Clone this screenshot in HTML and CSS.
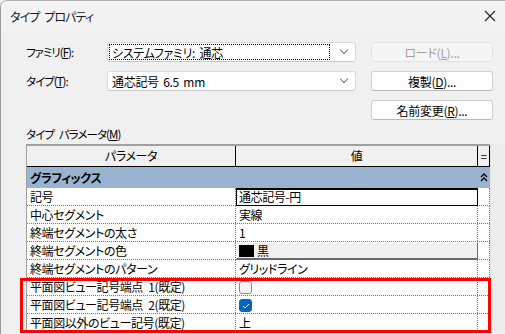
FILE: index.html
```html
<!DOCTYPE html>
<html lang="ja">
<head>
    <meta charset="UTF-8">
    <title>タイプ プロパティ</title>
    <link rel="stylesheet" href="styles.css">
</head>
<body>
    <div class="window">
        <div class="titlebar">
            <span class="title">タイプ プロパティ</span>
            <span class="close">
                <svg width="12" height="12" viewBox="0 0 12 12"><path d="M1 1L11 11M11 1L1 11" stroke="#222" stroke-width="1.1" fill="none"/></svg>
            </span>
        </div>

        <div class="content">
            <!-- family / type selection -->
            <div class="top-grid">
                <label class="lbl">ファミリ(<u>F</u>):</label>
                <div class="combo">
                    <span class="combo-text focused">システムファミリ: 通芯</span>
                    <span class="chev"></span>
                </div>
                <button class="btn disabled">ロード(<u>L</u>)...</button>

                <label class="lbl">タイプ(<u>T</u>):</label>
                <div class="combo">
                    <span class="combo-text">通芯記号 6.5 mm</span>
                    <span class="chev"></span>
                </div>
                <button class="btn">複製(<u>D</u>)...</button>

                <span></span>
                <span></span>
                <button class="btn">名前変更(<u>R</u>)...</button>
            </div>

            <div class="section-label">タイプ パラメータ(<u>M</u>)</div>

            <!-- parameter grid -->
            <div class="grid-wrap">
                <div class="pgrid">
                    <div class="row head">
                        <div class="cell">パラメータ</div>
                        <div class="cell">値</div>
                        <div class="cell eq">=</div>
                    </div>
                    <div class="row group">
                        <div class="cell">グラフィックス</div>
                        <div class="cell"></div>
                        <div class="cell chevs">
                            <svg width="8" height="9" viewBox="0 0 8 9"><path d="M1 4L4 1L7 4M1 8L4 5L7 8" stroke="#000" stroke-width="1.3" fill="none"/></svg>
                        </div>
                    </div>
                    <div class="row">
                        <div class="cell">記号</div>
                        <div class="cell"><span class="editbox">通芯記号-円</span></div>
                        <div class="cell"></div>
                    </div>
                    <div class="row">
                        <div class="cell">中心セグメント</div>
                        <div class="cell">実線</div>
                        <div class="cell"></div>
                    </div>
                    <div class="row">
                        <div class="cell">終端セグメントの太さ</div>
                        <div class="cell">1</div>
                        <div class="cell"></div>
                    </div>
                    <div class="row">
                        <div class="cell">終端セグメントの色</div>
                        <div class="cell"><span class="colorbtn"><span class="swatch"></span>黒</span></div>
                        <div class="cell"></div>
                    </div>
                    <div class="row">
                        <div class="cell">終端セグメントのパターン</div>
                        <div class="cell">グリッドライン</div>
                        <div class="cell"></div>
                    </div>
                    <div class="row">
                        <div class="cell">平面図ビュー記号端点 1(既定)</div>
                        <div class="cell"><span class="check"></span></div>
                        <div class="cell"></div>
                    </div>
                    <div class="row">
                        <div class="cell">平面図ビュー記号端点 2(既定)</div>
                        <div class="cell"><span class="check on">
                            <svg width="8" height="6" viewBox="0 0 8 6"><path d="M1 3L3 5L7 1" stroke="#fff" stroke-width="1" fill="none"/></svg>
                        </span></div>
                        <div class="cell"></div>
                    </div>
                    <div class="row">
                        <div class="cell">平面図以外のビュー記号(既定)</div>
                        <div class="cell">上</div>
                        <div class="cell"></div>
                    </div>
                </div>
                <div class="scroll"></div>
                <div class="highlight"></div>
            </div>
        </div>
    </div>
</body>
</html>
```

FILE: styles.css
```css
* {
    box-sizing: border-box;
}

body {
    margin: 0;
    font-family: "Noto Sans CJK JP", "Noto Sans", sans-serif;
    font-size: 12px;
    color: #000;
    background: #f0f0f0;
}

.window {
    width: 505px;
    height: 334px;
    background: #f0f0f0;
    border-left: 1px solid #9a9a9a;
    border-top: 1px solid #b0b0b0;
    border-top-left-radius: 7px;
    overflow: hidden;
}

.titlebar {
    height: 30px;
    background: #f3f3f3;
    display: flex;
    align-items: center;
    justify-content: space-between;
    padding: 0 9px 0 9px;
}

.title {
    font-size: 12px;
    font-feature-settings: "palt";
    letter-spacing: -0.9px;
    word-spacing: 3px;
    color: #1a1a1a;
}

.close {
    display: flex;
}

.content {
    padding: 11px 0 0 25px;
}

.top-grid {
    display: grid;
    grid-template-columns: 66px 249px 122px;
    column-gap: 15px;
    row-gap: 9px;
    grid-auto-rows: 20px;
    align-items: center;
}

.lbl {
    font-size: 11.5px;
    font-feature-settings: "palt";
    letter-spacing: -1px;
}

.combo {
    height: 20px;
    background: #fff;
    border: 1px solid #d9d9d9;
    border-bottom-color: #c8c8c8;
    border-radius: 3px;
    display: flex;
    align-items: center;
    padding: 0 8px 0 1px;
}

.combo-text {
    flex: 1;
    height: 16px;
    line-height: 15px;
    padding-left: 2px;
    border: 1px solid transparent;
    font-feature-settings: "palt";
    letter-spacing: -0.3px;
    word-spacing: 2px;
}

.combo-text.focused {
    border: 1px dotted #000;
    margin-right: 11px;
}

.chev {
    width: 6px;
    height: 6px;
    border-right: 1px solid #777;
    border-bottom: 1px solid #777;
    transform: rotate(45deg);
    margin-top: -4px;
}

.btn {
    height: 20px;
    font-family: inherit;
    font-size: 12px;
    background: #fdfdfd;
    border: 1px solid #d0d0d0;
    border-bottom-color: #b8b8b8;
    border-radius: 3px;
    padding: 0;
    color: #000;
    font-feature-settings: "palt";
    letter-spacing: -0.3px;
}

.btn.disabled {
    background: #f5f5f5;
    border-color: #e3e3e3;
    color: #a0a0a0;
}

.section-label {
    margin-top: 4px;
    height: 20px;
    line-height: 20px;
    font-size: 11.5px;
    font-feature-settings: "palt";
    letter-spacing: -0.9px;
    word-spacing: 3px;
}

.grid-wrap {
    position: relative;
    display: flex;
}

.pgrid {
    width: 465px;
    border-top: 2px solid #a0a0a0;
    border-left: 1px solid #a0a0a0;
    background: #fff;
}

.row {
    display: grid;
    grid-template-columns: 209px 242px 12px;
    height: 18px;
    border-bottom: 1px dotted #7a7a7a;
}

.cell {
    padding-left: 3px;
    line-height: 17px;
    white-space: nowrap;
    border-right: 1px dotted #7a7a7a;
    font-feature-settings: "palt";
    letter-spacing: -0.4px;
    word-spacing: 3px;
}

.row.head {
    height: 21px;
    background: #f0f0f0;
    border-bottom: 1px solid #000;
}

.row.head .cell {
    text-align: center;
    line-height: 20px;
    border-right: 1px solid #000;
    padding-left: 0;
}

.row.head .cell.eq {
    font-size: 11px;
}

.row.group {
    height: 21px;
    background: #99b4d1;
    border-bottom: none;
}

.row.group .cell {
    border-right: none;
    font-weight: bold;
    line-height: 21px;
}

.cell.chevs {
    display: flex;
    align-items: center;
    justify-content: center;
    padding-left: 0;
}

.editbox {
    display: block;
    height: 18px;
    margin-left: -3px;
    margin-right: -1px;
    border: 1px solid #000;
    border-top-width: 2px;
    padding-left: 2px;
    line-height: 14px;
    background: #fff;
}

.colorbtn {
    display: flex;
    align-items: center;
    height: 18px;
    margin-left: -3px;
    margin-right: -1px;
    background: #f0f0f0;
    border: 1px solid #fff;
    border-right-color: #6a6a6a;
    border-bottom: 2px solid #6a6a6a;
    padding-left: 2px;
}

.swatch {
    width: 15px;
    height: 12px;
    background: #000;
    margin-right: 3px;
}

.check {
    display: flex;
    align-items: center;
    justify-content: center;
    width: 13px;
    height: 13px;
    margin-top: 3px;
    border: 1px solid #8a8a8a;
    border-radius: 3px;
    background: #f7f7f7;
}

.check.on {
    background: #0067c0;
    border-color: #0067c0;
}

.scroll {
    width: 15px;
    background: #ececec;
    border-left: 1px solid #e4e4e4;
}

.highlight {
    position: absolute;
    left: -6px;
    top: 134px;
    width: 471px;
    height: 55px;
    border: 3px solid #ff0000;
}
```
